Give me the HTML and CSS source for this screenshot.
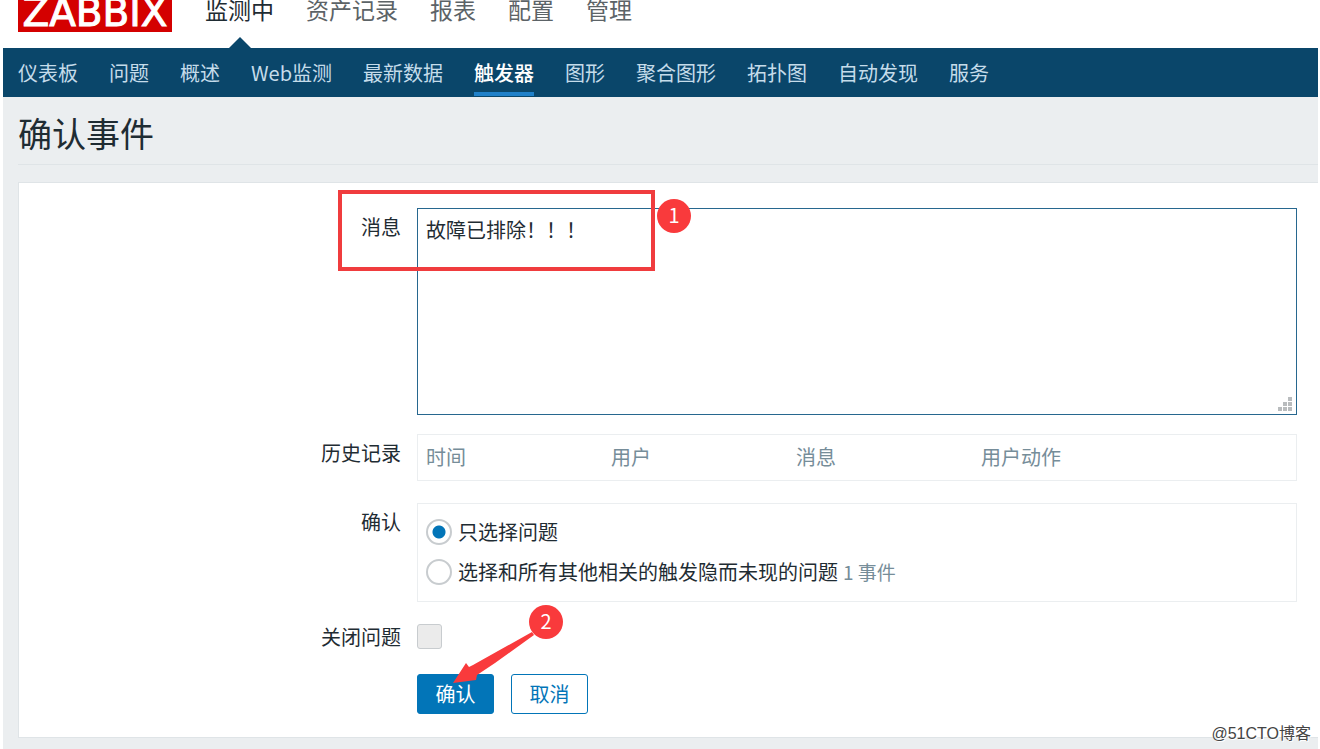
FILE: index.html
```html
<!DOCTYPE html>
<html lang="zh-CN">
<head>
    <meta charset="UTF-8">
    <meta name="viewport" content="width=device-width, initial-scale=1.0">
    <title>确认事件</title>
    <link rel="stylesheet" href="styles.css">
</head>
<body>
    <div class="page">
        <header class="header">
            <a class="logo" href="#">ZABBIX</a>
            <nav class="top-nav">
                <a class="selected" href="#">监测中</a>
                <a href="#">资产记录</a>
                <a href="#">报表</a>
                <a href="#">配置</a>
                <a href="#">管理</a>
            </nav>
        </header>
        <nav class="sub-nav">
            <a href="#">仪表板</a>
            <a href="#">问题</a>
            <a href="#">概述</a>
            <a href="#">Web监测</a>
            <a href="#">最新数据</a>
            <a class="selected" href="#">触发器</a>
            <a href="#">图形</a>
            <a href="#">聚合图形</a>
            <a href="#">拓扑图</a>
            <a href="#">自动发现</a>
            <a href="#">服务</a>
        </nav>
        <main>
            <h1>确认事件</h1>
            <form class="panel" onsubmit="return false;">
                <div class="row row-message">
                    <label class="name" for="message">消息</label>
                    <div class="field">
                        <textarea id="message" name="message">故障已排除！！！</textarea>
                        <svg class="grip" width="14" height="14" viewBox="0 0 14 14" fill="#b9bcbe">
                            <rect x="10" y="0" width="4" height="4"/>
                            <rect x="5" y="5" width="4" height="4"/>
                            <rect x="10" y="5" width="4" height="4"/>
                            <rect x="0" y="10" width="4" height="4"/>
                            <rect x="5" y="10" width="4" height="4"/>
                            <rect x="10" y="10" width="4" height="4"/>
                        </svg>
                        <div class="mark-box"></div>
                        <span class="mark mark-one">1</span>
                    </div>
                </div>
                <div class="row">
                    <span class="name">历史记录</span>
                    <div class="field box">
                        <table>
                            <thead>
                                <tr><th>时间</th><th>用户</th><th>消息</th><th>用户动作</th><th class="rest"></th></tr>
                            </thead>
                        </table>
                    </div>
                </div>
                <div class="row">
                    <span class="name">确认</span>
                    <div class="field box choices">
                        <label><input type="radio" name="type" checked>只选择问题</label>
                        <label><input type="radio" name="type">选择和所有其他相关的触发隐而未现的问题<span class="count">1 事件</span></label>
                    </div>
                </div>
                <div class="row row-close">
                    <label class="name" for="close">关闭问题</label>
                    <div class="field">
                        <input type="checkbox" id="close" name="close" disabled>
                    </div>
                </div>
                <div class="row row-buttons">
                    <div class="field buttons">
                        <button type="submit">确认</button>
                        <button type="button" class="alt">取消</button>
                        <svg class="arrow" width="84" height="54" viewBox="0 0 84 54" fill="#f93a3c">
                            <path d="M0 53 L13 33 L16 37 L20 35 L79 2 L81 5 L42 33 L24 45 L23 50 Z"/>
                        </svg>
                        <span class="mark mark-two">2</span>
                    </div>
                </div>
            </form>
        </main>
        <span class="watermark">@51CTO博客</span>
    </div>
</body>
</html>
```
FILE: styles.css
```css
* {
    box-sizing: border-box;
}
body {
    margin: 0;
    background: #fff;
    color: #1f2c33;
    font-family: "Noto Sans CJK SC", sans-serif;
    font-size: 20px;
    line-height: 26px;
}
a {
    text-decoration: none;
}
.page {
    position: relative;
    margin: 0 2px 0 3px;
}
.header {
    display: flex;
    align-items: flex-start;
    height: 48px;
    padding-left: 15px;
}
.logo {
    width: 154px;
    height: 32px;
    margin-right: 33px;
    background: #d40000;
    color: #fff;
    font-family: "DejaVu Sans", sans-serif;
    font-size: 39px;
    line-height: 25px;
    text-align: center;
    -webkit-text-stroke: 1px #fff;
}
.top-nav {
    display: flex;
    gap: 32px;
}
.top-nav a {
    position: relative;
    height: 48px;
    color: #5c6367;
    font-size: 23px;
    line-height: 18px;
}
.top-nav .selected {
    color: #1f2c33;
}
.top-nav .selected::after {
    content: "";
    position: absolute;
    bottom: 0;
    left: 50%;
    margin-left: -11px;
    border: 11px solid transparent;
    border-top: 0;
    border-bottom-color: #0a466a;
}
.sub-nav {
    display: flex;
    gap: 31px;
    height: 49px;
    padding-left: 15px;
    background: #0a466a;
}
.sub-nav a {
    height: 48px;
    padding-top: 6px;
    border-bottom: 4px solid transparent;
    color: #c5dcea;
    line-height: 38px;
    white-space: nowrap;
}
.sub-nav .selected {
    border-bottom-color: #1f80c9;
    color: #fff;
    font-weight: 500;
}
main {
    padding: 0 0 11px 15px;
    background: #ebeef0;
}
h1 {
    margin: 0 0 17px;
    padding-top: 4px;
    border-bottom: 1px solid #dfe4e7;
    font-size: 34px;
    font-weight: 400;
    line-height: 63px;
}
.panel {
    padding: 25px 21px 23px 0;
    border: 1px solid #dfe4e7;
    border-right: 0;
    background: #fff;
}
.row {
    display: flex;
    gap: 16px;
    margin-bottom: 22px;
}
.row-message {
    margin-bottom: 19px;
}
.name {
    width: 382px;
    padding-top: 6px;
    text-align: right;
}
.field {
    position: relative;
    flex: 1;
}
.box {
    border: 1px solid #ebeef0;
}
textarea {
    display: block;
    width: 100%;
    height: 207px;
    padding: 8px;
    border: 1px solid #27678f;
    outline: none;
    background: #fff;
    color: inherit;
    font: inherit;
    resize: none;
}
.grip {
    position: absolute;
    right: 5px;
    bottom: 4px;
}
table {
    width: 100%;
    border-collapse: collapse;
    table-layout: fixed;
}
th {
    width: 185px;
    padding: 9px 8px 11px;
    color: #768d99;
    font-weight: 400;
    line-height: 25px;
    text-align: left;
}
th.rest {
    width: auto;
}
.choices {
    display: flex;
    flex-direction: column;
    gap: 14px;
    padding: 15px 8px 16px;
}
.choices label {
    display: flex;
    align-items: center;
}
.count {
    margin-left: 5px;
    color: #768d99;
    font-size: 19px;
}
input {
    display: block;
    appearance: none;
    margin: 0;
    border: 2px solid #c8cccf;
    background: #fff;
}
input[type="radio"] {
    width: 26px;
    height: 26px;
    margin-right: 6px;
    border-radius: 50%;
}
input[type="radio"]:checked {
    background: radial-gradient(circle, #0275b8 6px, #fff 7px);
}
input[type="checkbox"] {
    width: 25px;
    height: 25px;
    border: 1px solid #c8cccf;
    border-radius: 3px;
    background: #ebebeb;
}
.row-close {
    margin-bottom: 24px;
}
.row-close .name {
    padding-top: 0;
}
.row-buttons {
    margin: 0 0 0 398px;
}
.buttons {
    display: flex;
    gap: 17px;
}
button {
    width: 77px;
    height: 40px;
    padding: 0;
    border: 1px solid #0275b8;
    border-radius: 3px;
    background: #0275b8;
    color: #fff;
    font: inherit;
}
button.alt {
    background: #fff;
    color: #0275b8;
}
/* numbered callouts */
.mark-box {
    position: absolute;
    top: -18px;
    left: -79px;
    width: 317px;
    height: 81px;
    border: 4px solid #f03c3e;
}
.mark {
    position: absolute;
    width: 34px;
    height: 34px;
    border-radius: 50%;
    background: #f93a3c;
    color: #fff;
    line-height: 31px;
    text-align: center;
}
.mark-one {
    top: -9px;
    left: 240px;
}
.mark-two {
    top: -69px;
    left: 112px;
}
.arrow {
    position: absolute;
    top: -44px;
    left: 36px;
}
.watermark {
    position: absolute;
    right: 7px;
    bottom: 2px;
    color: #444;
    font-family: "Liberation Sans", "Noto Sans CJK SC", sans-serif;
    font-size: 16px;
    text-shadow: 1px 1px 0 #fff;
}
```
